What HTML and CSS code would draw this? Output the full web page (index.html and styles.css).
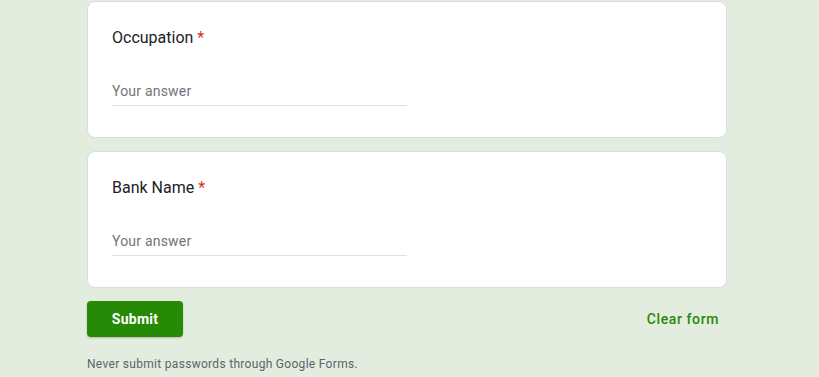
FILE: index.html
```html
<!DOCTYPE html>
<html lang="en">
<head>
    <meta charset="UTF-8">
    <meta name="viewport" content="width=device-width, initial-scale=1.0">
    <title>Form</title>
    <link rel="stylesheet" href="styles.css">
</head>
<body>
    <div class="container">
        <div class="question-card">
            <div class="question-title">Occupation <span class="required">*</span></div>
            <div class="answer">
                <input class="answer-input" type="text" placeholder="Your answer">
            </div>
        </div>
        <div class="question-card">
            <div class="question-title">Bank Name <span class="required">*</span></div>
            <div class="answer">
                <input class="answer-input" type="text" placeholder="Your answer">
            </div>
        </div>
        <div class="actions">
            <button class="submit-btn" type="button">Submit</button>
            <button class="clear-btn" type="button">Clear form</button>
        </div>
        <div class="disclaimer">Never submit passwords through Google Forms.</div>
    </div>
</body>
</html>
```

FILE: styles.css
```css
* {
    margin: 0;
    padding: 0;
    box-sizing: border-box;
}

body {
    font-family: Roboto, "Liberation Sans", Arial, sans-serif;
    background-color: #e2eddf;
    color: #202124;
    min-height: 100vh;
}

.container {
    width: 640px;
    margin-left: 87px;
    padding-top: 1px;
}

.question-card {
    background: white;
    border: 1px solid #dadce0;
    border-radius: 8px;
    padding: 24px 24px 31px;
    margin-bottom: 13px;
}

.question-title {
    font-size: 16px;
    line-height: 24px;
    color: #202124;
}

.required {
    color: #d93025;
}

.answer {
    margin-top: 30px;
    width: 50%;
}

.answer-input {
    display: block;
    width: 100%;
    height: 26px;
    padding-bottom: 3px;
    border: none;
    border-bottom: 1px solid #e0e0e0;
    outline: none;
    font-family: inherit;
    font-size: 14px;
    line-height: 22px;
    color: #202124;
    background: transparent;
}

.answer-input::placeholder {
    color: #70757a;
    letter-spacing: 0.2px;
}

.actions {
    display: flex;
    justify-content: space-between;
    align-items: center;
    margin-top: 2px;
}

.submit-btn {
    width: 96px;
    height: 36px;
    background: #278a06;
    color: white;
    border: none;
    border-radius: 4px;
    font-family: inherit;
    font-size: 14px;
    font-weight: 700;
    letter-spacing: 0.25px;
    cursor: pointer;
    box-shadow: 0 1px 2px rgba(60, 64, 67, 0.3);
}

.clear-btn {
    background: none;
    border: none;
    color: #278a06;
    font-family: inherit;
    font-size: 14px;
    font-weight: 500;
    letter-spacing: 0.6px;
    padding: 8px 8px;
    cursor: pointer;
}

.disclaimer {
    margin-top: 19px;
    font-size: 12px;
    line-height: 16px;
    color: #5f6368;
    letter-spacing: 0.3px;
}
```
